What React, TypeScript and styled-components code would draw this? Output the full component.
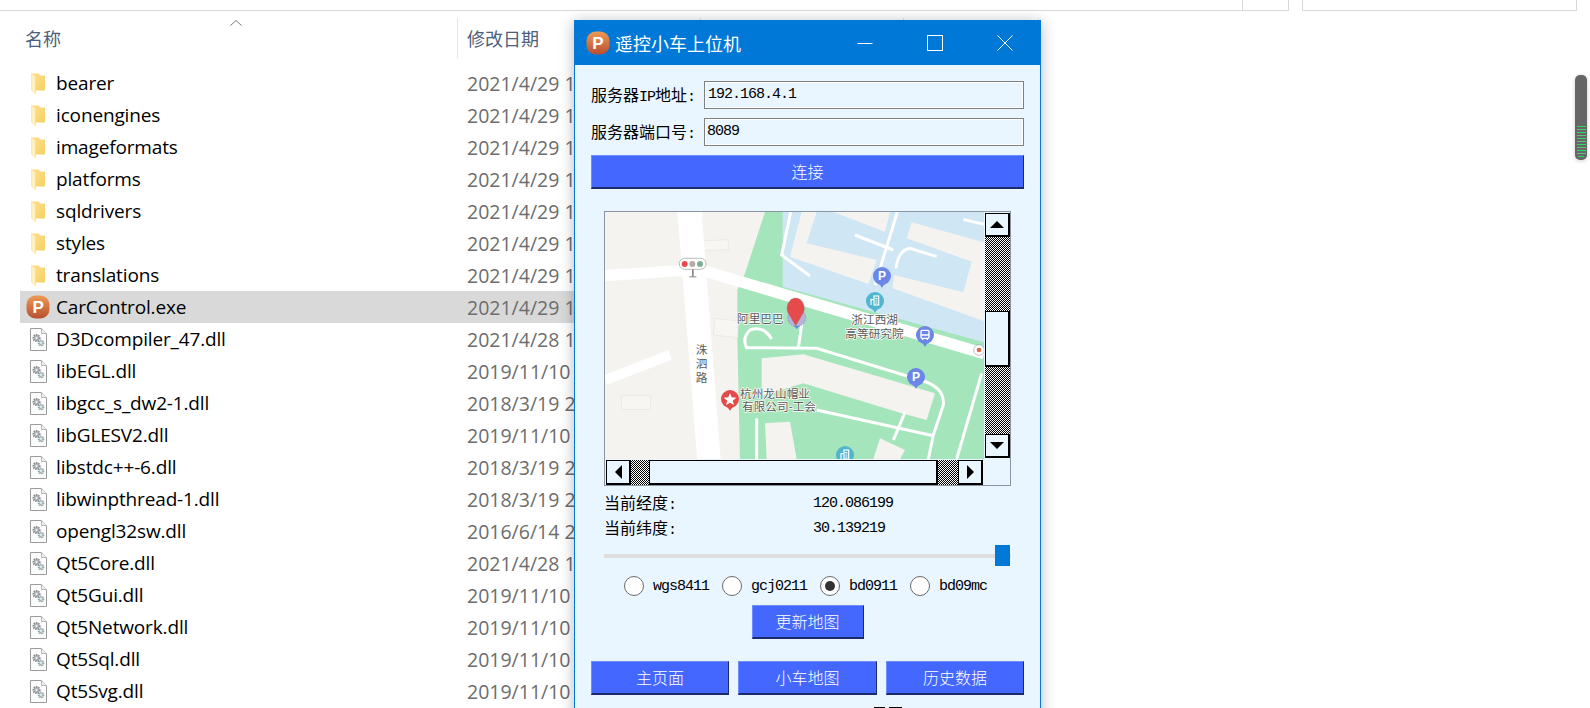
import React from 'react';
import styled, { createGlobalStyle } from 'styled-components';

const cjk = '"Noto Sans CJK SC", "Liberation Sans", sans-serif';
const mono = '"Liberation Mono", "Noto Sans CJK SC", monospace';
const uiBlue = '#0078d7';
const panel = '#e9f6ff';

const GlobalStyle = createGlobalStyle`
  html, body {
    margin: 0;
    padding: 0;
    background: #fff;
    overflow: hidden;
  }
`;

const Screen = styled.div`
  position: relative;
  width: 1590px;
  height: 708px;
  overflow: hidden;
  background: #fff;
`;

/* explorer behind the window */

const TopStrip = styled.div`
  display: flex;
  height: 11px;
  box-sizing: border-box;
`;

const TopBox = styled.div<{ $width: number; $gap?: number }>`
  width: ${(p) => p.$width}px;
  margin-left: ${(p) => p.$gap || 0}px;
  box-sizing: border-box;
  border-bottom: 1px solid #d9d9d9;
  border-right: 1px solid #d9d9d9;
  ${(p) => (p.$gap ? 'border-left: 1px solid #d9d9d9;' : '')}
`;

const HeaderRow = styled.div`
  display: flex;
  height: 40px;
  margin: 7px 0 9px 20px;
  font: 400 18px ${cjk};
  color: #4c607a;
`;

const HeaderCell = styled.div<{ $width: number; $pad: number }>`
  position: relative;
  width: ${(p) => p.$width}px;
  box-sizing: border-box;
  padding-left: ${(p) => p.$pad}px;
  border-right: 1px solid #e5e5e5;
  line-height: 40px;
`;

const SortMark = styled.svg`
  position: absolute;
  left: 210px;
  top: 2px;
`;

const FileList = styled.div`
  display: flex;
  flex-direction: column;
  width: 800px;
  margin-left: 20px;
`;

const FileRow = styled.div<{ $selected?: boolean }>`
  display: grid;
  grid-template-columns: 447px 1fr;
  height: 32px;
  align-items: center;
  background: ${(p) => (p.$selected ? '#d9d9d9' : 'transparent')};
`;

const NameCell = styled.div`
  display: flex;
  align-items: center;
  color: #000;
  font: 400 19px "Open Sans", sans-serif;
  letter-spacing: -0.15px;
`;

const IconBox = styled.div`
  display: flex;
  width: 36px;
  justify-content: center;
  align-items: center;
`;

const DateCell = styled.div`
  color: #6d6d6d;
  white-space: nowrap;
  font: 400 19.5px "Open Sans", sans-serif;
`;

const Overview = styled.div`
  position: absolute;
  left: 1575px;
  top: 75px;
  width: 12px;
  height: 85px;
  box-sizing: border-box;
  padding: 51px 1px 0;
  display: flex;
  flex-direction: column;
  gap: 2px;
  align-items: center;
  background: #666;
  border-radius: 5px;
  box-shadow: 0 1px 4px rgba(0, 0, 0, 0.2);
`;

const OverviewLine = styled.div<{ $dim: boolean; $short: boolean }>`
  width: ${(p) => (p.$short ? 6 : 9)}px;
  height: 1px;
  background: ${(p) => (p.$dim ? '#5fc07c' : '#1fe05a')};
`;

/* the window on top */

const Win = styled.div`
  position: absolute;
  left: 574px;
  top: 20px;
  width: 467px;
  height: 720px;
  box-sizing: border-box;
  border: 1px solid ${uiBlue};
  background: ${panel};
  box-shadow: 0 2px 14px rgba(0, 0, 0, 0.28);
  font: 400 16px ${cjk};
  color: #000;
`;

const TitleBar = styled.div`
  display: flex;
  align-items: center;
  height: 44px;
  padding-left: 11px;
  background: ${uiBlue};
  color: #fff;
`;

const TitleText = styled.div`
  margin-left: 5px;
  font-size: 18px;
  flex: 1;
`;

const WinButton = styled.div`
  display: flex;
  width: 70px;
  height: 44px;
  align-items: center;
  justify-content: center;
`;

const WinBody = styled.div`
  display: flex;
  flex-direction: column;
  padding: 16px 16px 0;
`;

const FieldRow = styled.div`
  display: flex;
  align-items: center;
  height: 28px;
  margin-bottom: 9px;
`;

const FieldLabel = styled.div`
  width: 113px;
  white-space: nowrap;
  padding-bottom: 2px;
`;

const Latin = styled.span`
  font: 400 15px ${mono};
  letter-spacing: -1px;
`;

const Field = styled.div<{ $pad: number }>`
  flex: 1;
  height: 28px;
  box-sizing: border-box;
  padding-left: ${(p) => p.$pad}px;
  border: 1px solid #808080;
  box-shadow: inset 0 0 0 1px #fff;
  font: 400 15px/25px ${mono};
  letter-spacing: -1px;
`;

const BlueButton = styled.div<{ $width?: number }>`
  display: flex;
  align-items: center;
  justify-content: center;
  height: 34px;
  box-sizing: border-box;
  padding-bottom: 2px;
  ${(p) => (p.$width ? `width: ${p.$width}px;` : '')}
  background: #4468ff;
  color: #fff;
  font-weight: 300;
  border-style: solid;
  border-width: 1px 1px 2px 1px;
  border-color: #6f8cff #1b2a6b #1b2a6b #6f8cff;
`;

const MapFrame = styled.div`
  display: grid;
  grid-template-columns: 379px 26px;
  grid-template-rows: 247px 26px;
  width: 407px;
  box-sizing: border-box;
  margin: 22px 0 0 13px;
  border: 1px solid #8a96a8;
`;

const VScroll = styled.div`
  display: flex;
  flex-direction: column;
  padding: 1px 0 0 1px;
`;

const HScroll = styled.div`
  display: flex;
  padding: 1px 0 0 1px;
`;

const Corner = styled.div`
  background: ${panel};
`;

const Dither = styled.div<{ $size: number; $vertical?: boolean }>`
  flex: none;
  ${(p) => (p.$vertical ? `height: ${p.$size}px;` : `width: ${p.$size}px;`)}
  background: repeating-conic-gradient(#000 0 25%, #fff 0 50%) 0 0 / 2px 2px;
`;

const ScrollPiece = styled.div<{ $size: number; $vertical?: boolean }>`
  flex: none;
  display: flex;
  align-items: center;
  justify-content: center;
  box-sizing: border-box;
  ${(p) => (p.$vertical ? `height: ${p.$size}px;` : `width: ${p.$size}px;`)}
  background: ${panel};
  border-style: solid;
  border-color: #000;
  border-width: 1px 2px 2px 1px;
`;

const Arrow = styled.div<{ $dir: 'up' | 'down' | 'left' | 'right' }>`
  width: 0;
  height: 0;
  border: 0 solid transparent;
  ${(p) =>
    p.$dir === 'up'
      ? 'border-width: 0 7px 7px; border-bottom-color: #000;'
      : p.$dir === 'down'
      ? 'border-width: 7px 7px 0; border-top-color: #000;'
      : p.$dir === 'left'
      ? 'border-width: 7px 7px 7px 0; border-right-color: #000;'
      : 'border-width: 7px 0 7px 7px; border-left-color: #000;'}
`;

const Readouts = styled.div`
  display: flex;
  flex-direction: column;
  margin: 4px 0 0 13px;
`;

const Readout = styled.div`
  display: grid;
  grid-template-columns: 209px 1fr;
  align-items: center;
  height: 25px;
`;

const ReadoutName = styled.div`
  padding-bottom: 2px;
`;

const Value = styled.div`
  font: 400 15px ${mono};
  letter-spacing: -1px;
`;

const Slider = styled.div`
  position: relative;
  display: flex;
  align-items: center;
  width: 407px;
  height: 21px;
  margin: 5px 0 0 13px;
`;

const SliderTrack = styled.div`
  width: 100%;
  height: 4px;
  background: #dedede;
`;

const SliderThumb = styled.div`
  position: absolute;
  right: 1px;
  top: 0;
  width: 15px;
  height: 21px;
  background: ${uiBlue};
`;

const RadioRow = styled.div`
  display: flex;
  align-items: center;
  gap: 13px;
  height: 20px;
  margin-top: 10px;
  padding-left: 33px;
`;

const RadioItem = styled.div`
  display: flex;
  align-items: center;
  gap: 9px;
  font: 400 15px ${mono};
  letter-spacing: -1px;
`;

const RadioDot = styled.div<{ $checked?: boolean }>`
  display: flex;
  align-items: center;
  justify-content: center;
  width: 20px;
  height: 20px;
  box-sizing: border-box;
  border: 1px solid #6a6a6a;
  border-radius: 50%;
  background: #fff;
  &::after {
    content: '';
    display: ${(p) => (p.$checked ? 'block' : 'none')};
    width: 10px;
    height: 10px;
    border-radius: 50%;
    background: #333;
  }
`;

const UpdateRow = styled.div`
  display: flex;
  justify-content: center;
  margin-top: 9px;
`;

const NavRow = styled.div`
  display: grid;
  grid-template-columns: 138px 139px 138px;
  gap: 9px;
  margin-top: 22px;
`;

const CutOffRow = styled.div`
  display: flex;
  gap: 4px;
  margin: 12px 0 0 283px;
`;

const CutOffMark = styled.div<{ $width: number }>`
  width: ${(p) => p.$width}px;
  height: 1px;
  background: #000;
`;

/* drawings */

const AppLogo: React.FC<{ size: number }> = ({ size }) => (
  <svg width={size} height={size} viewBox="0 0 24 24">
    <defs>
      <linearGradient id={`logo${size}`} x1="0" y1="0" x2="0" y2="1">
        <stop offset="0" stopColor="#ee9a55" />
        <stop offset="1" stopColor="#b84f30" />
      </linearGradient>
    </defs>
    <rect x="0.5" y="0.5" width="23" height="23" rx="9" fill={`url(#logo${size})`} />
    <text x="12" y="18" textAnchor="middle" fontFamily="Liberation Sans" fontWeight="700" fontSize="17" fill="#fff">
      P
    </text>
  </svg>
);

const FolderIcon = () => (
  <svg width="14" height="21" viewBox="0 0 14 21">
    <defs>
      <linearGradient id="folderBack" x1="0" y1="0" x2="1" y2="1">
        <stop offset="0" stopColor="#fbe08f" />
        <stop offset="1" stopColor="#f7cf62" />
      </linearGradient>
    </defs>
    <path d="M1 0.5 H8 L9 2.5 H14 V17.5 H4 V20 L1 17 Z" fill="url(#folderBack)" />
    <path d="M0 0 L4.5 3 V21 L0 16.5 Z" fill="#fff1bf" stroke="#f3d27c" strokeWidth="0.4" />
  </svg>
);

const DllIcon = () => (
  <svg width="17" height="23" viewBox="0 0 17 23">
    <path d="M0.5 0.5 H11.5 L16.5 5.5 V22.5 H0.5 Z" fill="#fcfcfc" stroke="#9b9b9b" />
    <path d="M11.5 0.5 V5.5 H16.5" fill="#f0f0f0" stroke="#b5b5b5" />
    <circle cx="6.5" cy="10" r="3" fill="#b9bdc0" stroke="#8e9296" strokeWidth="2.2" strokeDasharray="1.4 0.8" />
    <circle cx="6.5" cy="10" r="1" fill="#f4f4f4" />
    <circle cx="11" cy="15" r="2.4" fill="#c9d8de" stroke="#8fa0a8" strokeWidth="1.8" strokeDasharray="1.2 0.7" />
    <circle cx="11" cy="15" r="0.8" fill="#f4f4f4" />
  </svg>
);

const BluePin: React.FC<{ x: number; y: number; color: string; glyph: 'P' | 'bus' | 'tower' }> = ({ x, y, color, glyph }) => (
  <g>
    <circle cx={x} cy={y} r="27" fill={color} />
    <path d={`M${x - 8} ${y + 24} L${x} ${y + 35} L${x + 8} ${y + 24} Z`} fill={color} />
    {glyph === 'P' && (
      <text x={x} y={y + 13} textAnchor="middle" fontFamily="Liberation Sans" fontWeight="700" fontSize="36" fill="#fff">
        P
      </text>
    )}
    {glyph === 'bus' && (
      <g fill="none" stroke="#fff" strokeWidth="4">
        <rect x={x - 12} y={y - 14} width="24" height="24" rx="3" />
        <path d={`M${x - 12} ${y} H${x + 12} M${x - 7} ${y + 10} V${y + 15} M${x + 7} ${y + 10} V${y + 15}`} />
      </g>
    )}
    {glyph === 'tower' && (
      <g fill="none" stroke="#fff" strokeWidth="3.5">
        <path d={`M${x - 12} ${y + 12} V${y - 4} H${x - 3}`} />
        <rect x={x - 3} y={y - 15} width="14" height="27" />
        <path d={`M${x + 1} ${y - 7} H${x + 7} M${x + 1} ${y} H${x + 7} M${x + 1} ${y + 6} H${x + 7}`} />
      </g>
    )}
  </g>
);

const MapLabel: React.FC<{ x: number; y: number; children: React.ReactNode }> = ({ x, y, children }) => (
  <text
    x={x}
    y={y}
    fontFamily={cjk}
    fontSize="35"
    fill="#5a5a5a"
    stroke="#fff"
    strokeWidth="4"
    paintOrder="stroke"
  >
    {children}
  </text>
);

// Drawn in reference crop units, one map pixel is 3 units
const MapDrawing = () => (
  <svg width="379" height="247" viewBox="15 21 1137 741" preserveAspectRatio="none" style={{ display: 'block' }}>
    <rect x="15" y="21" width="1137" height="741" fill="#f5f3f0" />
    {/* lawn */}
    <path d="M495 21 H1152 V762 H420 L412 400 V255 L435 205 Z" fill="#a5e5bb" />
    {/* water */}
    <path d="M548 21 H1152 V412 L548 245 Z" fill="#cfe6f4" />
    {/* buildings in the water */}
    <path d="M605 21 H650 L620 115 L830 165 L805 237 L570 155 Z" fill="#f5f3f0" />
    <path d="M700 21 H870 L855 80 Z" fill="#f5f3f0" />
    <path d="M935 52 L1152 112 V348 L1115 335 L878 250 L882 210 L1090 262 L1115 170 L920 100 Z" fill="#f5f3f0" />
    {/* buildings on the lawn */}
    <path d="M485 460 L610 448 L1005 565 L980 645 L890 620 L610 535 L485 572 Z" fill="#f5f3f0" />
    <path d="M495 655 L570 650 L590 762 H500 Z" fill="#f5f3f0" />
    <path d="M840 700 L915 735 L900 762 H820 Z" fill="#f5f3f0" />
    {/* small grey blocks */}
    <g fill="#f7f6f3" stroke="#e6e4e0" strokeWidth="2">
      <path d="M302 108 L384 104 L386 134 L304 138 Z" />
      <path d="M345 340 L415 348 L413 398 L340 390 Z" />
      <rect x="65" y="572" width="86" height="41" />
    </g>
    {/* main roads */}
    <path d="M232 21 H305 L362 762 H292 Z" fill="#fff" />
    <path d="M15 212 L240 197 L320 200 L1152 446" fill="none" stroke="#fff" strokeWidth="34" />
    <path d="M15 525 L210 450" fill="none" stroke="#fff" strokeWidth="30" />
    {/* lanes */}
    <g fill="none" stroke="#fff" strokeWidth="9">
      <path d="M572 21 L545 150 L630 213" />
      <path d="M892 21 L825 240" />
      <path d="M765 90 L880 135 M1010 155 L930 130 Q895 135 888 190" />
      <path d="M1090 43 L1152 58" />
      <path d="M515 402 Q490 360 450 375 Q425 400 440 428 L650 430 L960 525 Q1035 545 1030 600 L1000 690" />
      <path d="M610 325 L595 428" />
      <path d="M650 615 L1000 692" />
      <path d="M1145 505 L1070 762" />
      <path d="M915 622 L880 705" />
      <path d="M470 640 V762" />
      <path d="M1000 690 L985 762" />
    </g>
    {/* traffic light */}
    <rect x="238" y="160" width="80" height="33" rx="16" fill="#fff" stroke="#9a9a9a" strokeWidth="2" />
    <circle cx="254" cy="177" r="9" fill="#e44c4c" />
    <circle cx="277" cy="177" r="9" fill="#b5ad9f" />
    <circle cx="300" cy="177" r="9" fill="#7ab09a" />
    <rect x="276" y="193" width="5" height="22" fill="#888" />
    <rect x="268" y="214" width="21" height="3" fill="#888" />
    <circle cx="1137" cy="435" r="16" fill="#fff" stroke="#a0a0a0" strokeWidth="2" />
    <circle cx="1137" cy="435" r="7" fill="#d96a52" />
    {/* pins */}
    <BluePin x={846} y={213} color="#6b86e6" glyph="P" />
    <BluePin x={825} y={288} color="#4fb6d0" glyph="tower" />
    <BluePin x={975} y={390} color="#6b86e6" glyph="bus" />
    <BluePin x={948} y={516} color="#6b86e6" glyph="P" />
    <BluePin x={735} y={750} color="#4fb6d0" glyph="tower" />
    <circle cx="390" cy="582" r="27" fill="#e34a4a" />
    <path d="M382 606 L390 617 L398 606 Z" fill="#e34a4a" />
    <path
      d="M390 564 L395 577 L409 578 L398 587 L402 600 L390 593 L378 600 L382 587 L371 578 L385 577 Z"
      fill="#fff"
    />
    {/* labels */}
    <MapLabel x={411} y={354}>阿里巴巴</MapLabel>
    <MapLabel x={754} y={358}>浙江西湖</MapLabel>
    <MapLabel x={736} y={398}>高等研究院</MapLabel>
    <MapLabel x={287} y={448}>洙</MapLabel>
    <MapLabel x={287} y={490}>泗</MapLabel>
    <MapLabel x={287} y={532}>路</MapLabel>
    <MapLabel x={420} y={580}>杭州龙山帽业</MapLabel>
    <MapLabel x={426} y={618}>有限公司-工会</MapLabel>
    {/* current position */}
    <circle cx="590" cy="338" r="27" fill="#b8b2d8" stroke="#6b86e6" strokeWidth="2" strokeDasharray="5 3" />
    <path d="M582 362 L590 372 L598 362 Z" fill="#6b86e6" />
    <path d="M587 362 L563 322 A26 31 0 1 1 611 322 Z" fill="#e54b4b" stroke="#7d8a80" strokeWidth="1" />
  </svg>
);

type FileItem = { name: string; date: string; kind: 'folder' | 'exe' | 'dll' };

const files: FileItem[] = [
  { name: 'bearer', date: '2021/4/29 15:32', kind: 'folder' },
  { name: 'iconengines', date: '2021/4/29 15:32', kind: 'folder' },
  { name: 'imageformats', date: '2021/4/29 15:32', kind: 'folder' },
  { name: 'platforms', date: '2021/4/29 15:32', kind: 'folder' },
  { name: 'sqldrivers', date: '2021/4/29 15:32', kind: 'folder' },
  { name: 'styles', date: '2021/4/29 15:32', kind: 'folder' },
  { name: 'translations', date: '2021/4/29 15:32', kind: 'folder' },
  { name: 'CarControl.exe', date: '2021/4/29 15:32', kind: 'exe' },
  { name: 'D3Dcompiler_47.dll', date: '2021/4/28 10:12', kind: 'dll' },
  { name: 'libEGL.dll', date: '2019/11/10 10:20', kind: 'dll' },
  { name: 'libgcc_s_dw2-1.dll', date: '2018/3/19 21:40', kind: 'dll' },
  { name: 'libGLESV2.dll', date: '2019/11/10 10:20', kind: 'dll' },
  { name: 'libstdc++-6.dll', date: '2018/3/19 21:40', kind: 'dll' },
  { name: 'libwinpthread-1.dll', date: '2018/3/19 21:40', kind: 'dll' },
  { name: 'opengl32sw.dll', date: '2016/6/14 20:02', kind: 'dll' },
  { name: 'Qt5Core.dll', date: '2021/4/28 10:12', kind: 'dll' },
  { name: 'Qt5Gui.dll', date: '2019/11/10 10:20', kind: 'dll' },
  { name: 'Qt5Network.dll', date: '2019/11/10 10:20', kind: 'dll' },
  { name: 'Qt5Sql.dll', date: '2019/11/10 10:20', kind: 'dll' },
  { name: 'Qt5Svg.dll', date: '2019/11/10 10:20', kind: 'dll' },
];

const radios = [
  { label: 'wgs8411' },
  { label: 'gcj0211' },
  { label: 'bd0911', checked: true },
  { label: 'bd09mc' },
];

export default function App() {
  return (
    <Screen>
      <GlobalStyle />

      <TopStrip>
        <TopBox $width={1243} />
        <TopBox $width={46} />
        <TopBox $width={275} $gap={13} />
      </TopStrip>

      <HeaderRow>
        <HeaderCell $width={438} $pad={5}>
          名称
          <SortMark width="12" height="6" viewBox="0 0 12 6">
            <path d="M0.5 5.5 L6 0.5 L11.5 5.5" fill="none" stroke="#7a7a7a" />
          </SortMark>
        </HeaderCell>
        <HeaderCell $width={243} $pad={9}>修改日期</HeaderCell>
        <HeaderCell $width={203} $pad={9} />
        <HeaderCell $width={135} $pad={9} />
      </HeaderRow>

      <FileList>
        {files.map((f) => (
          <FileRow key={f.name} $selected={f.kind === 'exe'}>
            <NameCell>
              <IconBox>
                {f.kind === 'folder' && <FolderIcon />}
                {f.kind === 'exe' && <AppLogo size={24} />}
                {f.kind === 'dll' && <DllIcon />}
              </IconBox>
              {f.name}
            </NameCell>
            <DateCell>{f.date}</DateCell>
          </FileRow>
        ))}
      </FileList>

      <Overview>
        {Array.from({ length: 11 }).map((_, i) => (
          <OverviewLine key={i} $dim={i % 2 === 1} $short={i === 10} />
        ))}
      </Overview>

      <Win>
        <TitleBar>
          <AppLogo size={24} />
          <TitleText>遥控小车上位机</TitleText>
          <WinButton>
            <svg width="16" height="16" viewBox="0 0 16 16">
              <path d="M0.5 8.5 H15.5" stroke="#fff" />
            </svg>
          </WinButton>
          <WinButton>
            <svg width="16" height="16" viewBox="0 0 16 16">
              <rect x="0.5" y="0.5" width="15" height="15" fill="none" stroke="#fff" />
            </svg>
          </WinButton>
          <WinButton>
            <svg width="16" height="16" viewBox="0 0 16 16">
              <path d="M0.5 0.5 L15.5 15.5 M15.5 0.5 L0.5 15.5" stroke="#fff" />
            </svg>
          </WinButton>
        </TitleBar>

        <WinBody>
          <FieldRow>
            <FieldLabel>服务器<Latin>IP</Latin>地址<Latin>:</Latin></FieldLabel>
            <Field $pad={3}>192.168.4.1</Field>
          </FieldRow>
          <FieldRow>
            <FieldLabel>服务器端口号<Latin>:</Latin></FieldLabel>
            <Field $pad={2}>8089</Field>
          </FieldRow>
          <BlueButton>连接</BlueButton>

          <MapFrame>
            <MapDrawing />
            <VScroll>
              <ScrollPiece $size={24} $vertical><Arrow $dir="up" /></ScrollPiece>
              <Dither $size={74} $vertical />
              <ScrollPiece $size={56} $vertical />
              <Dither $size={67} $vertical />
              <ScrollPiece $size={24} $vertical><Arrow $dir="down" /></ScrollPiece>
            </VScroll>
            <HScroll>
              <ScrollPiece $size={25}><Arrow $dir="left" /></ScrollPiece>
              <Dither $size={18} />
              <ScrollPiece $size={289} />
              <Dither $size={20} />
              <ScrollPiece $size={25}><Arrow $dir="right" /></ScrollPiece>
            </HScroll>
            <Corner />
          </MapFrame>

          <Readouts>
            <Readout>
              <ReadoutName>当前经度<Latin>:</Latin></ReadoutName>
              <Value>120.086199</Value>
            </Readout>
            <Readout>
              <ReadoutName>当前纬度<Latin>:</Latin></ReadoutName>
              <Value>30.139219</Value>
            </Readout>
          </Readouts>

          <Slider>
            <SliderTrack />
            <SliderThumb />
          </Slider>

          <RadioRow>
            {radios.map((r) => (
              <RadioItem key={r.label}>
                <RadioDot $checked={r.checked} />
                {r.label}
              </RadioItem>
            ))}
          </RadioRow>

          <UpdateRow>
            <BlueButton $width={112}>更新地图</BlueButton>
          </UpdateRow>

          <NavRow>
            <BlueButton>主页面</BlueButton>
            <BlueButton>小车地图</BlueButton>
            <BlueButton>历史数据</BlueButton>
          </NavRow>

          <CutOffRow>
            <CutOffMark $width={11} />
            <CutOffMark $width={13} />
          </CutOffRow>
        </WinBody>
      </Win>
    </Screen>
  );
}
